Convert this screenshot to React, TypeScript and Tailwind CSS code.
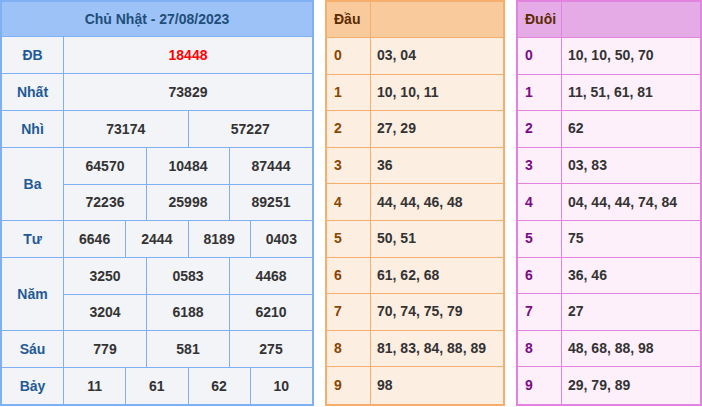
export default function App() {
  const font = { fontFamily: '"Liberation Sans", Arial, sans-serif' };
  const rows: { label: string; vals: string[][] }[] = [
    { label: "ĐB", vals: [["18448"]] },
    { label: "Nhất", vals: [["73829"]] },
    { label: "Nhì", vals: [["73174", "57227"]] },
    { label: "Ba", vals: [["64570", "10484", "87444"], ["72236", "25998", "89251"]] },
    { label: "Tư", vals: [["6646", "2444", "8189", "0403"]] },
    { label: "Năm", vals: [["3250", "0583", "4468"], ["3204", "6188", "6210"]] },
    { label: "Sáu", vals: [["779", "581", "275"]] },
    { label: "Bảy", vals: [["11", "61", "62", "10"]] },
  ];
  const dau = ["03, 04", "10, 10, 11", "27, 29", "36", "44, 44, 46, 48", "50, 51", "61, 62, 68", "70, 74, 75, 79", "81, 83, 84, 88, 89", "98"];
  const duoi = ["10, 10, 50, 70", "11, 51, 61, 81", "62", "03, 83", "04, 44, 44, 74, 84", "75", "36, 46", "27", "48, 68, 88, 98", "29, 79, 89"];
  return (
    <div className="w-[702px] h-[407px] bg-white flex text-[14px] font-bold" style={font}>
      <div className="w-[314px] h-[406px] border-2 border-[#7fb0f3] bg-[#f3f4f8] flex flex-col">
        <div className="h-[36px] bg-[#9dc2f8] border-b border-[#7fb0f3] flex items-center justify-center text-[#1f4e78]">Chủ Nhật - 27/08/2023</div>
        {rows.map((r, i) => (
          <div key={i} className="flex border-b border-[#7fb0f3] last:border-b-0">
            <div className="w-[62px] border-r border-[#7fb0f3] flex items-center justify-center text-[#1f5a96]">{r.label}</div>
            <div className="flex-1 flex flex-col">
              {r.vals.map((line, j) => (
                <div key={j} className={`h-[36px] flex ${j > 0 ? "border-t border-[#7fb0f3]" : ""}`}>
                  {line.map((v, k) => (
                    <div key={k} className={`flex-1 flex items-center justify-center ${k > 0 ? "border-l border-[#7fb0f3]" : ""} ${i === 0 ? "text-[#ff0000]" : "text-[#333]"}`}>{v}</div>
                  ))}
                </div>
              ))}
            </div>
          </div>
        ))}
      </div>
      <div className="w-[11px]" />
      <Side title="Đầu" data={dau} border="border-[#f5ae6b]" head="bg-[#f9cb9c]" body="bg-[#fdeee2]" digit="text-[#8b4500]" w="w-[180px]" />
      <div className="w-[11px]" />
      <Side title="Đuôi" data={duoi} border="border-[#e283e0]" head="bg-[#e5abe7]" body="bg-[#fdf0fb]" digit="text-[#7d0a85]" w="w-[186px]" />
    </div>
  );
}

function Side({ title, data, border, head, body, digit, w }: { title: string; data: string[]; border: string; head: string; body: string; digit: string; w: string }) {
  return (
    <div className={`${w} h-[406px] border-2 ${border} ${body} flex flex-col`}>
      <div className={`h-[36px] ${head} border-b ${border} flex text-[#5a2a00]`}>
        <div className={`w-[44px] border-r ${border} flex items-center pl-[7px]`}>{title}</div>
        <div className="flex-1" />
      </div>
      {data.map((d, i) => (
        <div key={i} className={`h-[36.6px] flex ${i < 9 ? `border-b ${border}` : ""}`}>
          <div className={`w-[44px] border-r ${border} flex items-center pl-[7px] ${digit}`}>{i}</div>
          <div className="flex-1 flex items-center pl-[6px] text-[#333]">{d}</div>
        </div>
      ))}
    </div>
  );
}
